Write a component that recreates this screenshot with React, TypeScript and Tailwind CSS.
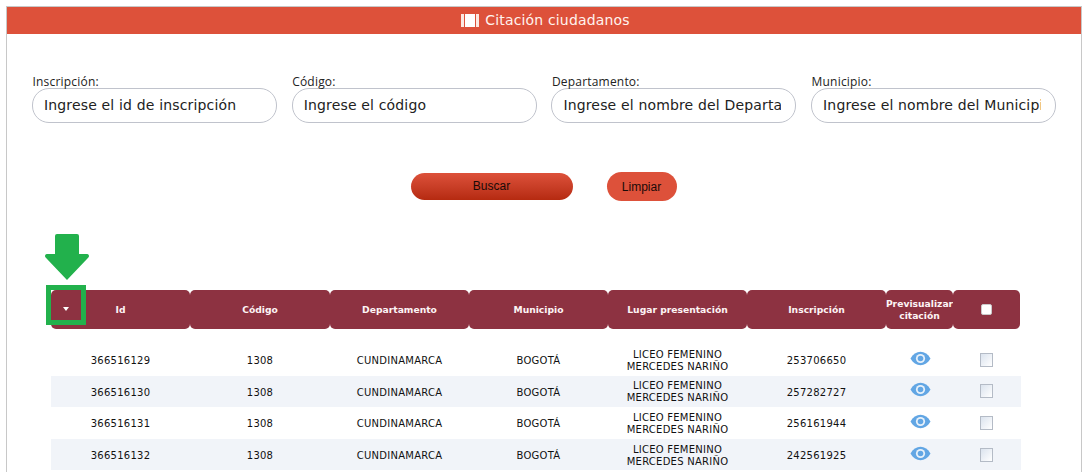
const filters = [
  { label: "Inscripción:", placeholder: "Ingrese el id de inscripción" },
  { label: "Código:", placeholder: "Ingrese el código" },
  { label: "Departamento:", placeholder: "Ingrese el nombre del Departamento" },
  { label: "Municipio:", placeholder: "Ingrese el nombre del Municipio" },
];

const columns = ["Id", "Código", "Departamento", "Municipio", "Lugar presentación", "Inscripción"];

const rows = [
  { id: "366516129", inscripcion: "253706650" },
  { id: "366516130", inscripcion: "257282727" },
  { id: "366516131", inscripcion: "256161944" },
  { id: "366516132", inscripcion: "242561925" },
];

const gridCols = "grid grid-cols-[139px_140px_139px_139px_139px_139px_67px_67px]";

const EyeIcon = () => (
  <svg width="21" height="15" viewBox="0 0 21 15" className="-mt-[5px] ml-[2px]">
    <path d="M0.5 7.5C3 3 6.5 0.7 10.5 0.7S18 3 20.5 7.5C18 12 14.5 14.3 10.5 14.3S3 12 0.5 7.5Z" fill="#62a6e4" />
    <circle cx="10.5" cy="7.5" r="4.6" fill="#e8f1fa" />
    <circle cx="10.5" cy="7.5" r="2.8" fill="#62a6e4" />
  </svg>
);

const RowCheck = () => (
  <span className="block -mt-[2px] w-[13px] h-[14px] border border-[#b4bbc6] bg-gradient-to-br from-[#dbe3ee] to-white" />
);

const Filter = ({ label, placeholder }: { label: string; placeholder: string }) => (
  <label className="block w-[245px]">
    <span className="block h-[14px] pl-[0.5px] text-[12px] leading-[15px] text-[#222] font-['Open_Sans',sans-serif] tracking-[0.2px]">
      {label}
    </span>
    <input
      readOnly
      placeholder={placeholder}
      className="block w-full h-[35px] rounded-[17px] border border-[#c0c3cc] bg-white pl-[11px] pr-[14px] pb-[2px] text-[14px] tracking-[0.16px] font-['DejaVu_Sans',sans-serif] placeholder:text-[#222]"
    />
  </label>
);

const App = () => {
  return (
    <div className="w-[1085px] h-[472px] overflow-hidden bg-white pt-[6px] pl-[6px] pr-[3px] font-['DejaVu_Sans',sans-serif]">
      <div className="relative h-[466px] border-x border-t border-[#c8c8c8]">
        <div className="flex items-center justify-center gap-[6px] h-[27px] pl-[3px] bg-[#dd513a] text-[14px] text-[#fff3ee] tracking-[0.16px]">
          <span className="flex gap-px w-[18px] h-[13px]">
            <span className="w-[3px] bg-[#fbe9e2]" />
            <span className="flex-1 bg-white" />
            <span className="w-[3px] bg-[#fbe9e2]" />
          </span>
          Citación ciudadanos
        </div>

        <div className="flex gap-[14.7px] pl-[25px] pt-[40px]">
          {filters.map(filter => (
            <Filter key={filter.label} {...filter} />
          ))}
        </div>

        <div className="flex items-center justify-center gap-[34px] pt-[49px] pr-[1px] font-['Liberation_Sans',sans-serif] text-[12px] text-[#1a0a08]">
          <button className="w-[162px] h-[27px] rounded-[14px] bg-gradient-to-b from-[#dd513a] to-[#b52a10] pb-[1px]">
            Buscar
          </button>
          <button className="w-[70px] h-[29px] rounded-[15px] bg-[#dd513a] pt-[1px]">Limpiar</button>
        </div>

        <div className="pl-[44px] pt-[89px]">
          <div className={`${gridCols} h-[39px] w-[969px] text-[9.2px] font-bold text-[#fdf4f5]`}>
            {columns.map((column, i) => (
              <div
                key={column}
                className="relative flex items-center justify-center rounded-[5px] bg-[#8d3241]"
              >
                {i === 0 && (
                  <span className="absolute left-[12px] top-[17px] w-0 h-0 border-x-[3.5px] border-t-[4px] border-x-transparent border-t-white" />
                )}
                {column}
              </div>
            ))}
            <div className="flex items-center justify-center text-center leading-[12px] rounded-[5px] bg-[#8d3241] whitespace-nowrap">
              Previsualizar
              <br />
              citación
            </div>
            <div className="flex items-center justify-center rounded-[5px] bg-[#8d3241]">
              <span className="block w-[11px] h-[11px] rounded-[2px] border border-[#c9c9c9] bg-white" />
            </div>
          </div>

          <div className="pt-[15px] text-[10px] tracking-[0.25px] text-[#111] text-center">
            {rows.map((row, i) => (
              <div
                key={row.id}
                className={`${gridCols} h-[31.6px] w-[970px] items-center pt-[2px] ${i % 2 === 1 ? "bg-[#f1f4f9]" : "bg-white"}`}
              >
                <span>{row.id}</span>
                <span>1308</span>
                <span>CUNDINAMARCA</span>
                <span>BOGOTÁ</span>
                <span className="leading-[12px]">
                  LICEO FEMENINO
                  <br />
                  MERCEDES NARIÑO
                </span>
                <span>{row.inscripcion}</span>
                <span className="flex justify-center">
                  <EyeIcon />
                </span>
                <span className="flex justify-center">
                  <RowCheck />
                </span>
              </div>
            ))}
          </div>
        </div>

        {/* flecha verde sobre la tabla */}
        <svg width="44" height="46" viewBox="0 0 44 46" className="absolute left-[38px] top-[227px]">
          <path
            d="M10 2a2 2 0 0 1 2-2h20a2 2 0 0 1 2 2v18h8a2 2 0 0 1 1.4 3.4L22 46 0.6 23.4A2 2 0 0 1 2 20h8Z"
            fill="#22b14c"
          />
        </svg>
        <span className="absolute left-[39px] top-[278px] w-[40px] h-[40px] border-[5px] border-[#22b14c]" />
      </div>
    </div>
  );
};

export default App;
